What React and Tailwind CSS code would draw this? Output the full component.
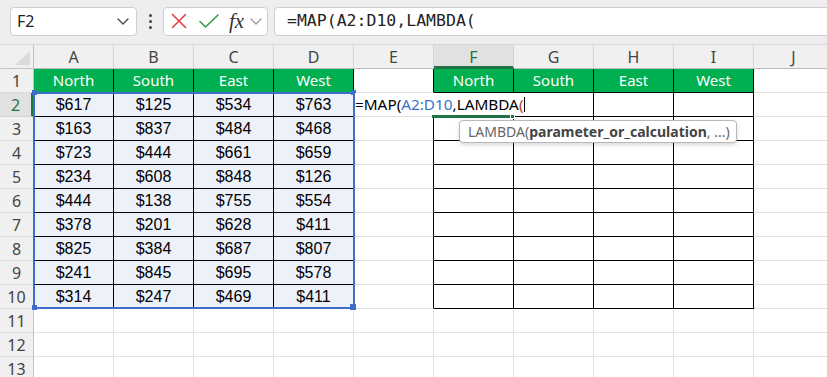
import React from 'react';

const heads = ['North', 'South', 'East', 'West'];
const values = [
  [617, 125, 534, 763],
  [163, 837, 484, 468],
  [723, 444, 661, 659],
  [234, 608, 848, 126],
  [444, 138, 755, 554],
  [378, 201, 628, 411],
  [825, 384, 687, 807],
  [241, 845, 695, 578],
  [314, 247, 469, 411],
];
const cols = ['A', 'B', 'C', 'D', 'E', 'F', 'G', 'H', 'I', 'J'];
const rows = Array.from({ length: 13 }, (_, i) => i + 1);

const sans = { fontFamily: '"Noto Sans", "Open Sans", sans-serif' };

const Chevron = ({ className }) => (
  <svg className={className} width="12" height="7" viewBox="0 0 12 7" fill="none">
    <path d="M1 1l5 5 5-5" stroke="currentColor" strokeWidth="1.3" strokeLinecap="round" strokeLinejoin="round" />
  </svg>
);

const TopBar = () => (
  <div className="flex h-[45px] items-center bg-[#eeeef0] pb-[2px] pl-[10px] border-b border-[#d6d6d6]">
    <div className="flex h-[29px] w-[127px] shrink-0 items-center justify-between rounded-[4px] border border-[#cfcfcf] bg-white pl-[6px] pr-[7px]">
      <span className="text-[16px] text-[#222]">F2</span>
      <Chevron className="text-[#444]" />
    </div>
    <div className="flex w-[26px] shrink-0 flex-col items-center gap-[3px]">
      <span className="h-[3px] w-[3px] rounded-full bg-[#444]" />
      <span className="h-[3px] w-[3px] rounded-full bg-[#444]" />
      <span className="h-[3px] w-[3px] rounded-full bg-[#444]" />
    </div>
    <div className="flex h-[29px] w-[105px] shrink-0 items-center rounded-[4px] border border-[#cfcfcf] bg-white pl-[7px]">
      <svg width="16" height="16" viewBox="0 0 16 16">
        <path d="M1.5 1.5l13 13M14.5 1.5l-13 13" stroke="#e0393e" strokeWidth="1.5" strokeLinecap="round" />
      </svg>
      <svg className="ml-[12px]" width="20" height="15" viewBox="0 0 20 15">
        <path d="M1 7.5l5.5 5.5L19 1" stroke="#3b9a48" strokeWidth="1.6" fill="none" strokeLinecap="round" strokeLinejoin="round" />
      </svg>
      <span className="ml-[10px] text-[21px] italic leading-none text-[#333]" style={{ fontFamily: '"Liberation Serif", serif' }}>
        fx
      </span>
      <Chevron className="ml-[6px] text-[#999]" />
    </div>
    <div className="ml-[6px] flex h-[29px] w-[600px] shrink-0 items-center rounded-l-[4px] border border-[#cfcfcf] bg-white pl-[12px]">
      <span className="text-[16.5px] text-[#222]" style={{ fontFamily: '"DejaVu Sans Mono", "Liberation Mono", monospace' }}>
        =MAP(A2:D10,LAMBDA(
      </span>
    </div>
  </div>
);

const cellClass = (r, c) => {
  const inTable = r <= 10 && ((c >= 0 && c <= 3) || (c >= 5 && c <= 8));
  let cls = 'flex items-center justify-center border-r border-b text-[16px] text-black ';
  if (inTable) {
    cls += 'border-black ';
    if (r === 1) cls += 'bg-[#00b050] ';
    else if (c <= 3) cls += 'bg-[#edf1f9] ';
    else cls += 'bg-white ';
  } else if (c === 4 && r <= 10) {
    cls += 'border-r-black border-b-[#e1e1e1] bg-white ';
  } else {
    cls += 'border-[#e1e1e1] bg-white ';
  }
  return cls;
};

const Cell = ({ r, c }) => {
  let content = null;
  if (r === 1 && (c <= 3 || (c >= 5 && c <= 8))) {
    content = (
      <span className="text-[15px] text-white" style={sans}>
        {heads[c <= 3 ? c : c - 5]}
      </span>
    );
  } else if (r >= 2 && r <= 10 && c <= 3) {
    content = (
      <span style={{ fontFamily: '"Liberation Sans", Arial, sans-serif' }}>${values[r - 2][c]}</span>
    );
  }
  return <div className={cellClass(r, c)}>{content}</div>;
};

export default function App() {
  return (
    <div className="h-[377px] w-[827px] overflow-hidden bg-white" style={sans}>
      <TopBar />
      <div className="relative grid grid-cols-[34px_repeat(10,80px)] grid-rows-[24px_repeat(13,24px)]">
        <div className="relative border-r border-b border-[#c4c4c4] bg-[#f0f0f0]">
          <svg className="absolute left-[15px] top-[6px]" width="15" height="14" viewBox="0 0 15 14">
            <path d="M15 0V14H0Z" fill="#dadada" />
          </svg>
        </div>
        {cols.map((col) => (
          <div
            key={col}
            className={
              col === 'F'
                ? 'flex items-center justify-center border-r border-b-[3px] border-r-[#d4d4d4] border-b-[#217346] bg-[#e1e1e1] pt-[2px] text-[16px] text-[#217346]'
                : 'flex items-center justify-center border-r border-b border-r-[#d4d4d4] border-b-[#bdbdbd] bg-[#f0f0f0] text-[16px] text-[#444]'
            }
          >
            {col}
          </div>
        ))}
        {rows.map((r) => (
          <React.Fragment key={r}>
            <div
              className={
                r === 2
                  ? 'flex items-center justify-center border-r-[3px] border-b border-r-[#217346] border-b-[#d4d4d4] bg-[#e1e1e1] text-[16px] text-[#217346]'
                  : 'flex items-center justify-center border-r border-b border-r-[#c4c4c4] border-b-[#dadada] bg-[#f0f0f0] text-[16px] text-[#444]'
              }
            >
              {r}
            </div>
            {cols.map((_, c) => (
              <Cell key={c} r={r} c={c} />
            ))}
          </React.Fragment>
        ))}

        {/* range highlight A2:D10 */}
        <div className="pointer-events-none absolute left-[33px] top-[47px] h-[217px] w-[322px] border-2 border-[#3d6fc8]" />
        <div className="absolute left-[32px] top-[45px] h-[5px] w-[5px] bg-[#3d6fc8]" />
        <div className="absolute left-[351px] top-[45px] h-[5px] w-[5px] bg-[#3d6fc8]" />
        <div className="absolute left-[32px] top-[260px] h-[5px] w-[5px] bg-[#3d6fc8]" />
        <div className="absolute left-[350px] top-[259px] h-[6px] w-[6px] bg-[#3d6fc8]" />

        {/* active cell F2 */}
        <div className="absolute left-[432px] top-[70px] h-[3px] w-[81px] bg-[#217346]" />
        <div className="absolute left-[510px] top-[69px] h-[5px] w-[5px] border border-white bg-[#217346]" />

        {/* in-cell editor */}
        <div className="absolute left-[355px] top-[48px] flex h-[22px] w-[172px] items-center bg-white text-[15.3px] text-black">
          <span>=MAP(</span>
          <span className="text-[#3d6fc8]">A2:D10</span>
          <span>,LAMBDA</span>
          <span className="text-[#c0392b]">(</span>
          <span className="ml-[1px] h-[15px] w-[1px] bg-black" />
        </div>

        {/* function tooltip */}
        <div className="absolute left-[459px] top-[75px] flex h-[23px] w-[278px] items-center rounded-[4px] border border-[#b8b8b8] bg-white pl-[8px] text-[14px] text-[#666] shadow-[0_2px_4px_rgba(0,0,0,0.15)]">
          <span>LAMBDA(</span>
          <span className="font-bold text-[#444]">parameter_or_calculation</span>
          <span>, ...)</span>
        </div>
      </div>
    </div>
  );
}
